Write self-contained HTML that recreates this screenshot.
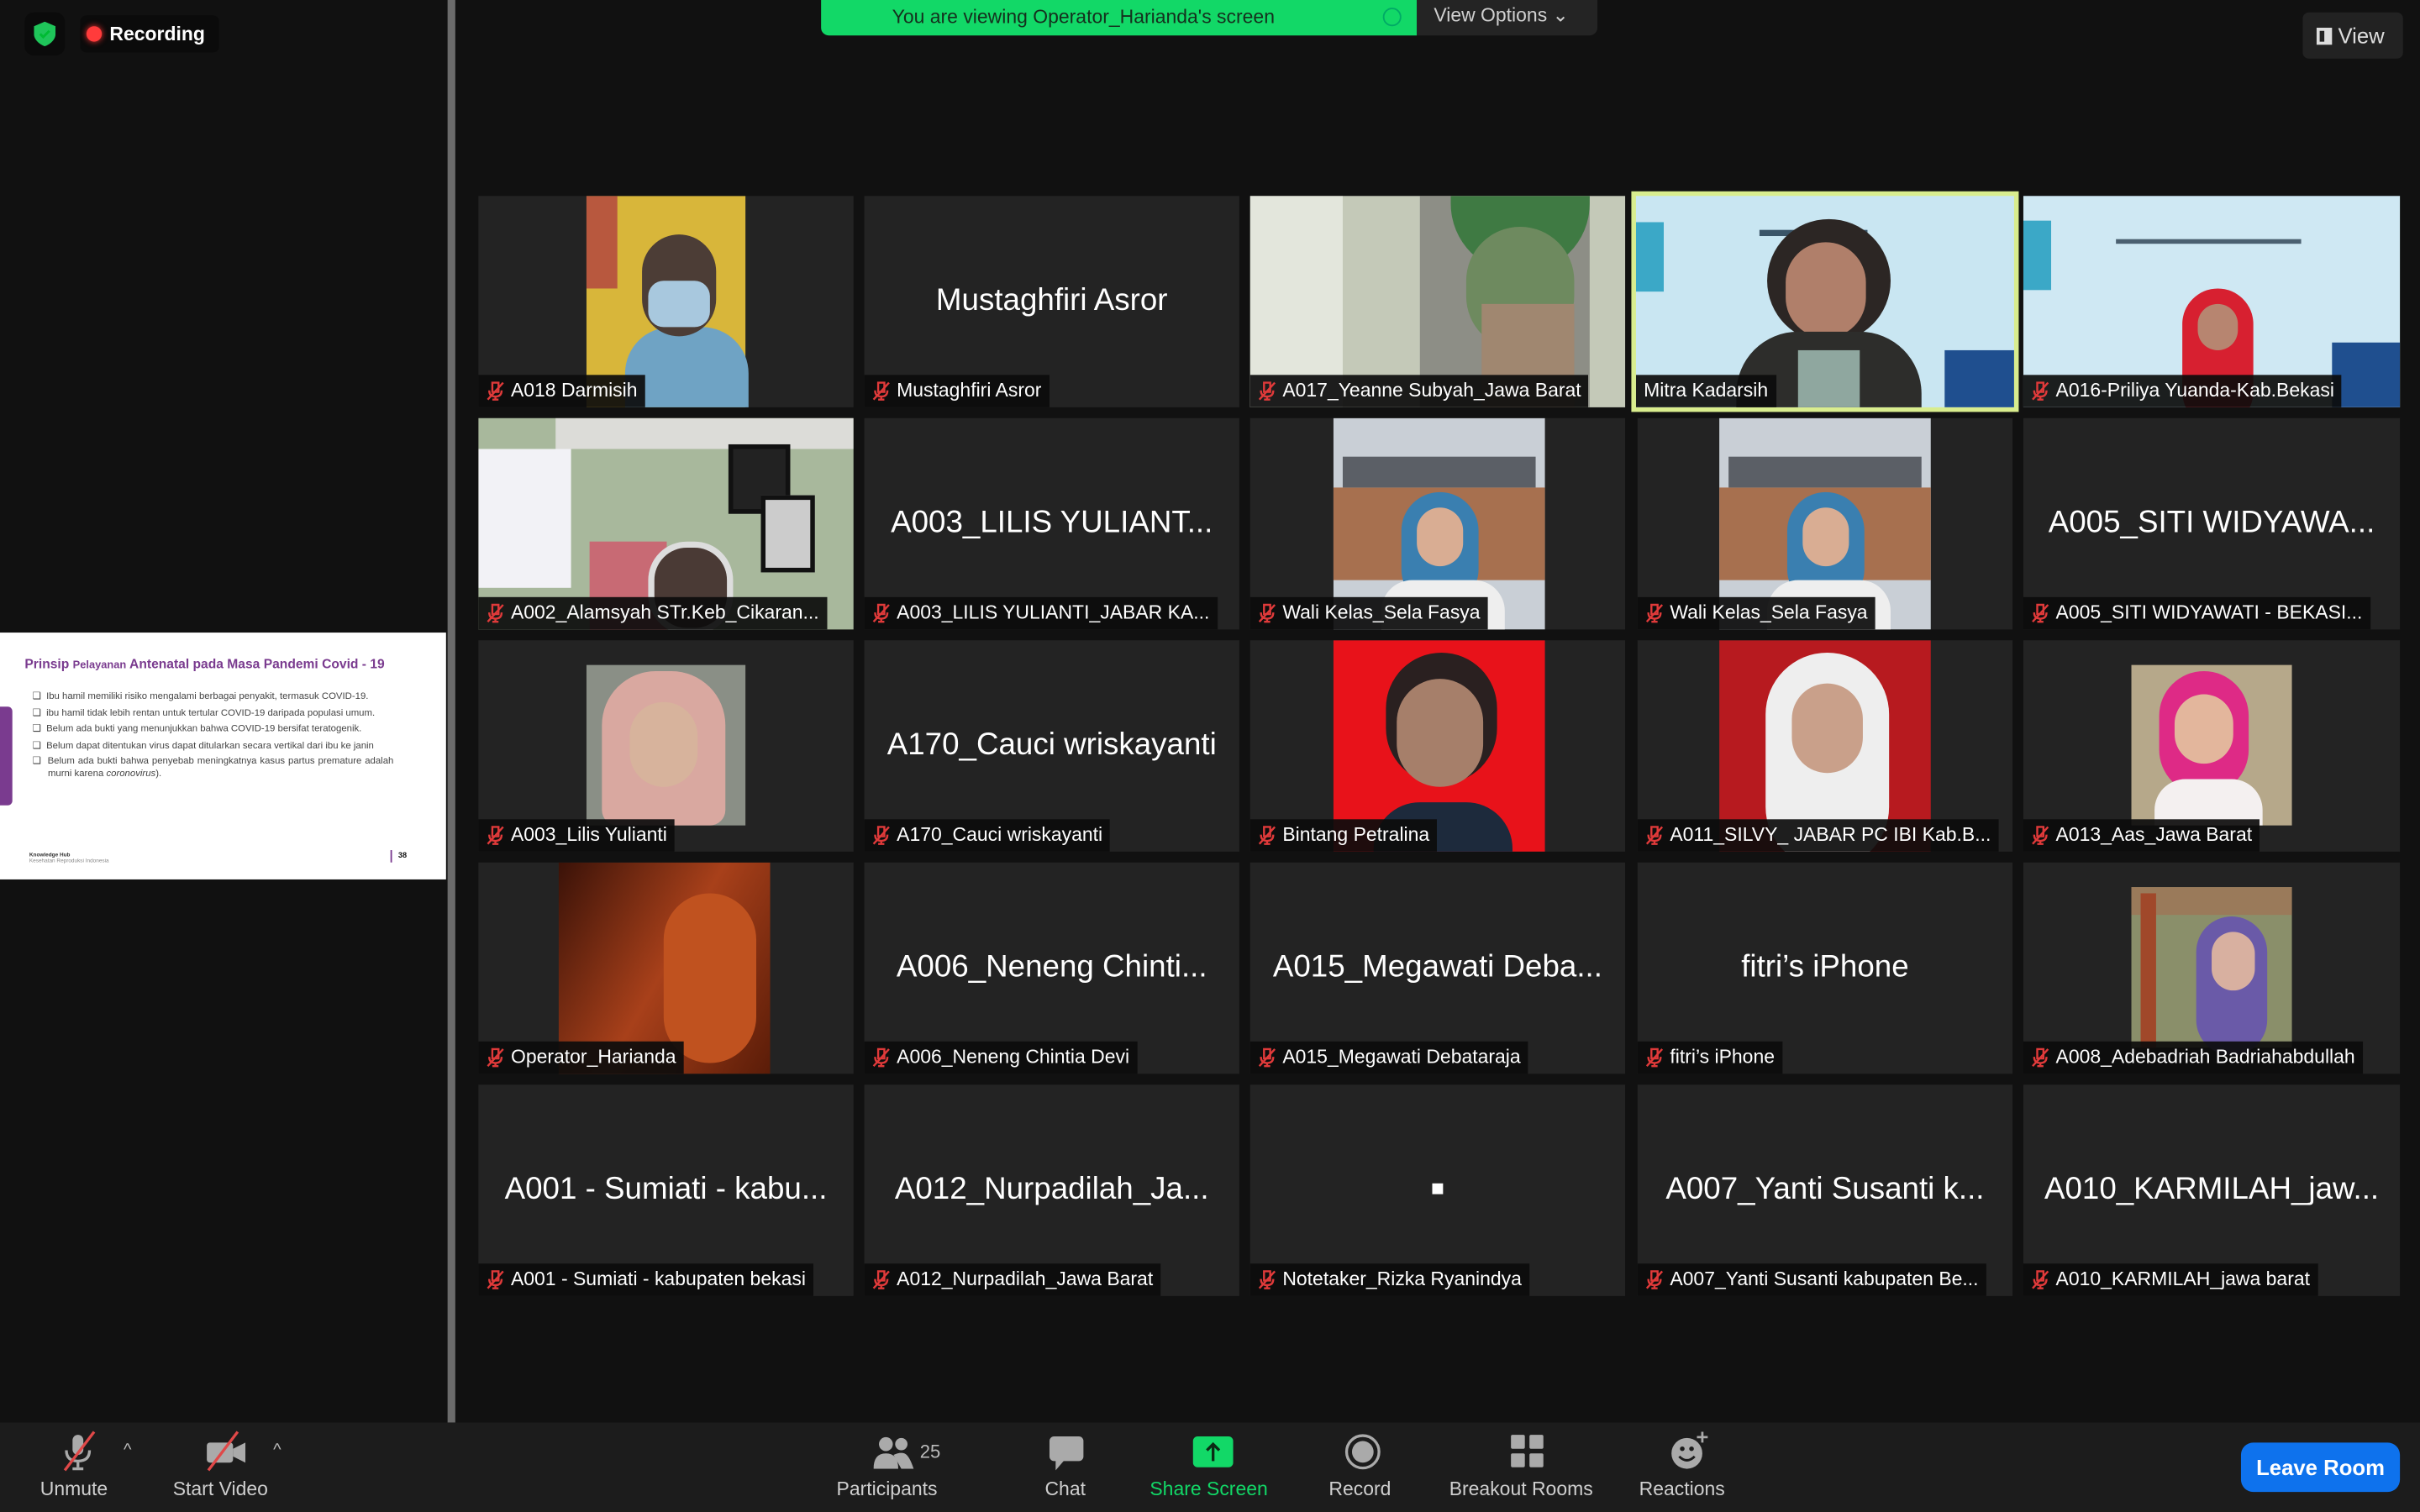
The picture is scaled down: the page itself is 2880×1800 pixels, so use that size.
<!DOCTYPE html>
<html><head><meta charset="utf-8"><style>
*{margin:0;padding:0;box-sizing:border-box}
html,body{width:2880px;height:1800px;overflow:hidden;background:#111}
#w{position:absolute;left:0;top:0;width:1568px;height:980px;transform:scale(1.836735);transform-origin:0 0;background:#111;font-family:"Liberation Sans",sans-serif;color:#fff}
.a{position:absolute}
.t{position:absolute;width:243px;height:137px;background:#232323;overflow:hidden}
.big{position:absolute;left:0;right:0;top:57px;text-align:center;font-size:20px;color:#fff;white-space:nowrap}
.lb{position:absolute;left:0;bottom:0;height:21px;background:rgba(12,12,12,.92);font-size:12.5px;line-height:21px;padding:0 5px 0 21px;white-space:nowrap;color:#fff}
.mic{position:absolute;left:5px;top:4px;width:12px;height:13px}
.tb{position:absolute;top:928px;text-align:center;font-size:12.5px;color:#cfcfcf}
</style></head><body><div id="w">
<div class="a" style="left:290px;top:0;width:5px;height:922px;background:#6b6b6b"></div>
<div class="a" style="left:16px;top:8px;width:26px;height:28px;background:#0b0b0b;border-radius:6px"></div>
<svg class="a" style="left:22px;top:14px" width="14" height="16" viewBox="0 0 14 16"><path d="M7 0L14 3V8C14 12 10 15 7 16C4 15 0 12 0 8V3Z" fill="#1fc55a"/><path d="M4 8L6 10L10 6" stroke="#0b3" stroke-width="1.6" fill="none"/></svg>
<div class="a" style="left:52px;top:10px;width:90px;height:24px;background:#0b0b0b;border-radius:4px"></div>
<div class="a" style="left:56px;top:17px;width:10px;height:10px;border-radius:50%;background:#ff3b3b;box-shadow:0 0 4px #f33"></div>
<div class="a" style="left:71px;top:15px;font-size:12.5px;font-weight:bold">Recording</div>
<div class="a" style="left:0;top:410px;width:289px;height:160px;background:#fff">
 <div class="a" style="left:0;top:48px;width:8px;height:64px;background:#7a3b8f;border-radius:0 3px 3px 0"></div>
 <div class="a" style="left:16px;top:15px;font-size:8.5px;font-weight:bold;color:#7a3b8f;white-space:nowrap">Prinsip <span style="font-size:7px">Pelayanan</span> Antenatal pada Masa Pandemi Covid - 19</div>
 <div class="a" style="left:21px;top:38px;width:234px;font-size:6.2px;line-height:7.2px;color:#444;text-align:justify">
  <div style="margin-bottom:3.4px;padding-left:10px;text-indent:-10px">❑&nbsp; Ibu hamil memiliki risiko mengalami berbagai penyakit, termasuk COVID-19.</div>
  <div style="margin-bottom:3.4px;padding-left:10px;text-indent:-10px">❑&nbsp; ibu hamil tidak lebih rentan untuk tertular COVID-19 daripada populasi umum.</div>
  <div style="margin-bottom:3.4px;padding-left:10px;text-indent:-10px">❑&nbsp; Belum ada bukti yang menunjukkan bahwa COVID-19 bersifat teratogenik.</div>
  <div style="margin-bottom:3.4px;padding-left:10px;text-indent:-10px">❑&nbsp; Belum dapat ditentukan virus dapat ditularkan secara vertikal dari ibu ke janin</div>
  <div style="padding-left:10px;text-indent:-10px">❑&nbsp; Belum ada bukti bahwa penyebab meningkatnya kasus partus premature adalah murni karena <i>coronovirus</i>).</div>
 </div>
 <div class="a" style="left:19px;top:142px;font-size:3.5px;color:#333;font-weight:bold">Knowledge Hub<br><span style="font-weight:normal;color:#888">Kesehatan Reproduksi Indonesia</span></div>
 <div class="a" style="left:253px;top:141px;width:1px;height:8px;background:#7a3b8f"></div>
 <div class="a" style="left:258px;top:142px;font-size:5px;font-weight:bold;color:#111">38</div>
</div>
<div class="a" style="left:532px;top:0;width:386px;height:23px;background:#12d867;border-radius:0 0 0 5px;color:#15301e;font-size:12.5px;line-height:22px;padding-left:46px">You are viewing Operator_Harianda's screen</div>
<div class="a" style="left:896px;top:5px;width:12px;height:12px;border-radius:50%;border:1px solid #0a6;background:#12d867"></div>
<div class="a" style="left:918px;top:0;width:117px;height:23px;background:#242424;border-radius:0 0 5px 0;color:#cfcfcf;font-size:12.5px;line-height:21px;padding-left:11px">View Options ⌄</div>
<div class="a" style="left:1492px;top:8px;width:65px;height:30px;background:#222;border-radius:4px;font-size:14px;line-height:30px;padding-left:9px;color:#ddd"><span style="display:inline-block;width:10px;height:11px;border:2px solid #ddd;border-right-width:5px;vertical-align:-1px"></span> View</div>

<div class="t" style="left:310px;top:127px">
 <div class="a" style="left:70px;top:0;width:103px;height:137px;background:#d8b63a"></div>
 <div class="a" style="left:70px;top:0;width:20px;height:60px;background:#b8583e"></div>
 <div class="a" style="left:95px;top:85px;width:80px;height:60px;border-radius:30px 30px 0 0;background:#6fa3c4"></div>
 <div class="a" style="left:106px;top:25px;width:48px;height:66px;border-radius:24px;background:#4c3d36"></div>
 <div class="a" style="left:110px;top:55px;width:40px;height:30px;border-radius:10px;background:#a8c8de"></div>
 <div class="lb">A018 Darmisih<svg class="mic" viewBox="0 0 12 13"><path d="M4 1h4v6H4zM2 6q0 4 4 4t4-4M6 10v2M4 12h4" stroke="#e03a3a" fill="none" stroke-width="1.3"/><path d="M1 12L11 1" stroke="#e03a3a" stroke-width="1.3"/></svg></div>
</div>
<div class="t" style="left:560px;top:127px"><div class="big">Mustaghfiri Asror</div>
 <div class="lb">Mustaghfiri Asror<svg class="mic" viewBox="0 0 12 13"><path d="M4 1h4v6H4zM2 6q0 4 4 4t4-4M6 10v2M4 12h4" stroke="#e03a3a" fill="none" stroke-width="1.3"/><path d="M1 12L11 1" stroke="#e03a3a" stroke-width="1.3"/></svg></div></div>
<div class="t" style="left:810px;top:127px;background:#c4c9b8">
 <div class="a" style="left:0;top:0;width:60px;height:137px;background:#e3e6dc"></div>
 <div class="a" style="left:110px;top:0;width:110px;height:137px;background:#8d8e86"></div>
 <div class="a" style="left:130px;top:0;width:90px;height:50px;border-radius:0 0 45px 45px;background:#3f7a43"></div>
 <div class="a" style="left:140px;top:20px;width:70px;height:80px;border-radius:35px;background:#6e8a5f"></div>
 <div class="a" style="left:150px;top:70px;width:60px;height:67px;background:#a08770"></div>
 <div class="lb">A017_Yeanne Subyah_Jawa Barat<svg class="mic" viewBox="0 0 12 13"><path d="M4 1h4v6H4zM2 6q0 4 4 4t4-4M6 10v2M4 12h4" stroke="#e03a3a" fill="none" stroke-width="1.3"/><path d="M1 12L11 1" stroke="#e03a3a" stroke-width="1.3"/></svg></div></div>
<div class="t" style="left:1057px;top:124px;width:251px;height:143px;background:#d9ed8e;padding:3px">
 <div style="position:relative;width:245px;height:137px;background:#c9e6f2;overflow:hidden">
  <div class="a" style="left:0;top:17px;width:18px;height:45px;background:#3ba8c7"></div>
  <div class="a" style="left:200px;top:100px;width:45px;height:37px;background:#1f4f8f"></div>
  <div class="a" style="left:80px;top:22px;width:70px;height:4px;background:#3b5568"></div>
  <div class="a" style="left:85px;top:15px;width:80px;height:80px;border-radius:40px;background:#2c2624"></div>
  <div class="a" style="left:97px;top:30px;width:52px;height:62px;border-radius:26px;background:#b07f6a"></div>
  <div class="a" style="left:65px;top:88px;width:120px;height:60px;border-radius:40px 40px 0 0;background:#2d2d2b"></div>
  <div class="a" style="left:105px;top:100px;width:40px;height:40px;background:#8fa79f"></div>
  <div class="lb" style="padding-left:5px">Mitra Kadarsih</div>
 </div></div>
<div class="t" style="left:1311px;top:127px;width:244px;background:#cfe8f3">
 <div class="a" style="left:0;top:16px;width:18px;height:45px;background:#3ba8c7"></div>
 <div class="a" style="left:200px;top:95px;width:44px;height:42px;background:#1f4f8f"></div>
 <div class="a" style="left:60px;top:28px;width:120px;height:3px;background:#4b6070"></div>
 <div class="a" style="left:103px;top:60px;width:46px;height:90px;border-radius:23px;background:#d72030"></div>
 <div class="a" style="left:113px;top:70px;width:26px;height:30px;border-radius:13px;background:#b78570"></div>
 <div class="lb">A016-Priliya Yuanda-Kab.Bekasi<svg class="mic" viewBox="0 0 12 13"><path d="M4 1h4v6H4zM2 6q0 4 4 4t4-4M6 10v2M4 12h4" stroke="#e03a3a" fill="none" stroke-width="1.3"/><path d="M1 12L11 1" stroke="#e03a3a" stroke-width="1.3"/></svg></div></div>

<div class="t" style="left:310px;top:271px;background:#a8b89c">
 <div class="a" style="left:0;top:20px;width:60px;height:90px;background:#f2f2f6"></div>
 <div class="a" style="left:50px;top:0;width:193px;height:20px;background:#dcdcd8"></div>
 <div class="a" style="left:72px;top:80px;width:50px;height:60px;background:#c86a74"></div>
 <div class="a" style="left:162px;top:17px;width:40px;height:45px;background:#222;border:3px solid #111"></div>
 <div class="a" style="left:183px;top:50px;width:35px;height:50px;background:#ccc;border:3px solid #111"></div>
 <div class="a" style="left:110px;top:80px;width:55px;height:60px;border-radius:25px;background:#4a3a35;border:4px solid #ddd"></div>
 <div class="lb">A002_Alamsyah STr.Keb_Cikaran...<svg class="mic" viewBox="0 0 12 13"><path d="M4 1h4v6H4zM2 6q0 4 4 4t4-4M6 10v2M4 12h4" stroke="#e03a3a" fill="none" stroke-width="1.3"/><path d="M1 12L11 1" stroke="#e03a3a" stroke-width="1.3"/></svg></div></div>
<div class="t" style="left:560px;top:271px"><div class="big">A003_LILIS YULIANT...</div>
 <div class="lb">A003_LILIS YULIANTI_JABAR KA...<svg class="mic" viewBox="0 0 12 13"><path d="M4 1h4v6H4zM2 6q0 4 4 4t4-4M6 10v2M4 12h4" stroke="#e03a3a" fill="none" stroke-width="1.3"/><path d="M1 12L11 1" stroke="#e03a3a" stroke-width="1.3"/></svg></div></div>
<div class="t" style="left:810px;top:271px">
 <div class="a" style="left:54px;top:0;width:137px;height:137px;background:#c9cfd6"></div>
 <div class="a" style="left:54px;top:45px;width:137px;height:60px;background:#a7704f"></div>
 <div class="a" style="left:60px;top:25px;width:125px;height:20px;background:#5b5f66"></div>
 <div class="a" style="left:98px;top:48px;width:50px;height:75px;border-radius:25px;background:#3a7fb0"></div>
 <div class="a" style="left:108px;top:58px;width:30px;height:38px;border-radius:15px;background:#d9ad93"></div>
 <div class="a" style="left:85px;top:105px;width:80px;height:40px;border-radius:20px 20px 0 0;background:#eee"></div>
 <div class="lb">Wali Kelas_Sela Fasya<svg class="mic" viewBox="0 0 12 13"><path d="M4 1h4v6H4zM2 6q0 4 4 4t4-4M6 10v2M4 12h4" stroke="#e03a3a" fill="none" stroke-width="1.3"/><path d="M1 12L11 1" stroke="#e03a3a" stroke-width="1.3"/></svg></div></div>
<div class="t" style="left:1061px;top:271px">
 <div class="a" style="left:53px;top:0;width:137px;height:137px;background:#c9cfd6"></div>
 <div class="a" style="left:53px;top:45px;width:137px;height:60px;background:#a7704f"></div>
 <div class="a" style="left:59px;top:25px;width:125px;height:20px;background:#5b5f66"></div>
 <div class="a" style="left:97px;top:48px;width:50px;height:75px;border-radius:25px;background:#3a7fb0"></div>
 <div class="a" style="left:107px;top:58px;width:30px;height:38px;border-radius:15px;background:#d9ad93"></div>
 <div class="a" style="left:84px;top:105px;width:80px;height:40px;border-radius:20px 20px 0 0;background:#eee"></div>
 <div class="lb">Wali Kelas_Sela Fasya<svg class="mic" viewBox="0 0 12 13"><path d="M4 1h4v6H4zM2 6q0 4 4 4t4-4M6 10v2M4 12h4" stroke="#e03a3a" fill="none" stroke-width="1.3"/><path d="M1 12L11 1" stroke="#e03a3a" stroke-width="1.3"/></svg></div></div>
<div class="t" style="left:1311px;top:271px;width:244px"><div class="big">A005_SITI WIDYAWA...</div>
 <div class="lb">A005_SITI WIDYAWATI - BEKASI...<svg class="mic" viewBox="0 0 12 13"><path d="M4 1h4v6H4zM2 6q0 4 4 4t4-4M6 10v2M4 12h4" stroke="#e03a3a" fill="none" stroke-width="1.3"/><path d="M1 12L11 1" stroke="#e03a3a" stroke-width="1.3"/></svg></div></div>

<div class="t" style="left:310px;top:415px">
 <div class="a" style="left:70px;top:16px;width:103px;height:104px;background:#8a8f86"></div>
 <div class="a" style="left:80px;top:20px;width:80px;height:100px;border-radius:35px 35px 10px 10px;background:#d9a8a0"></div>
 <div class="a" style="left:98px;top:40px;width:44px;height:55px;border-radius:22px;background:#d7b39c"></div>
 <div class="lb">A003_Lilis Yulianti<svg class="mic" viewBox="0 0 12 13"><path d="M4 1h4v6H4zM2 6q0 4 4 4t4-4M6 10v2M4 12h4" stroke="#e03a3a" fill="none" stroke-width="1.3"/><path d="M1 12L11 1" stroke="#e03a3a" stroke-width="1.3"/></svg></div></div>
<div class="t" style="left:560px;top:415px"><div class="big">A170_Cauci wriskayanti</div>
 <div class="lb">A170_Cauci wriskayanti<svg class="mic" viewBox="0 0 12 13"><path d="M4 1h4v6H4zM2 6q0 4 4 4t4-4M6 10v2M4 12h4" stroke="#e03a3a" fill="none" stroke-width="1.3"/><path d="M1 12L11 1" stroke="#e03a3a" stroke-width="1.3"/></svg></div></div>
<div class="t" style="left:810px;top:415px">
 <div class="a" style="left:54px;top:0;width:137px;height:137px;background:#e8121a"></div>
 <div class="a" style="left:88px;top:8px;width:72px;height:85px;border-radius:36px;background:#2a2020"></div>
 <div class="a" style="left:95px;top:25px;width:56px;height:70px;border-radius:28px;background:#a67f6a"></div>
 <div class="a" style="left:80px;top:105px;width:90px;height:40px;border-radius:30px 30px 0 0;background:#1d2a3c"></div>
 <div class="lb">Bintang Petralina<svg class="mic" viewBox="0 0 12 13"><path d="M4 1h4v6H4zM2 6q0 4 4 4t4-4M6 10v2M4 12h4" stroke="#e03a3a" fill="none" stroke-width="1.3"/><path d="M1 12L11 1" stroke="#e03a3a" stroke-width="1.3"/></svg></div></div>
<div class="t" style="left:1061px;top:415px">
 <div class="a" style="left:53px;top:0;width:137px;height:137px;background:#b71a1f"></div>
 <div class="a" style="left:83px;top:8px;width:80px;height:140px;border-radius:40px;background:#eee"></div>
 <div class="a" style="left:100px;top:28px;width:46px;height:58px;border-radius:23px;background:#c9a08a"></div>
 <div class="lb">A011_SILVY_ JABAR PC IBI Kab.B...<svg class="mic" viewBox="0 0 12 13"><path d="M4 1h4v6H4zM2 6q0 4 4 4t4-4M6 10v2M4 12h4" stroke="#e03a3a" fill="none" stroke-width="1.3"/><path d="M1 12L11 1" stroke="#e03a3a" stroke-width="1.3"/></svg></div></div>
<div class="t" style="left:1311px;top:415px;width:244px">
 <div class="a" style="left:70px;top:16px;width:104px;height:104px;background:#b6a88a"></div>
 <div class="a" style="left:88px;top:20px;width:58px;height:80px;border-radius:29px;background:#de2a86"></div>
 <div class="a" style="left:98px;top:35px;width:38px;height:45px;border-radius:19px;background:#e3b69c"></div>
 <div class="a" style="left:85px;top:90px;width:70px;height:30px;border-radius:20px 20px 0 0;background:#f4f0f0"></div>
 <div class="lb">A013_Aas_Jawa Barat<svg class="mic" viewBox="0 0 12 13"><path d="M4 1h4v6H4zM2 6q0 4 4 4t4-4M6 10v2M4 12h4" stroke="#e03a3a" fill="none" stroke-width="1.3"/><path d="M1 12L11 1" stroke="#e03a3a" stroke-width="1.3"/></svg></div></div>

<div class="t" style="left:310px;top:559px">
 <div class="a" style="left:52px;top:0;width:137px;height:137px;background:linear-gradient(120deg,#3a1208,#a8401a 50%,#5a1c08)"></div>
 <div class="a" style="left:120px;top:20px;width:60px;height:110px;border-radius:30px;background:#c0521f"></div>
 <div class="lb">Operator_Harianda<svg class="mic" viewBox="0 0 12 13"><path d="M4 1h4v6H4zM2 6q0 4 4 4t4-4M6 10v2M4 12h4" stroke="#e03a3a" fill="none" stroke-width="1.3"/><path d="M1 12L11 1" stroke="#e03a3a" stroke-width="1.3"/></svg></div></div>
<div class="t" style="left:560px;top:559px"><div class="big">A006_Neneng Chinti...</div>
 <div class="lb">A006_Neneng Chintia Devi<svg class="mic" viewBox="0 0 12 13"><path d="M4 1h4v6H4zM2 6q0 4 4 4t4-4M6 10v2M4 12h4" stroke="#e03a3a" fill="none" stroke-width="1.3"/><path d="M1 12L11 1" stroke="#e03a3a" stroke-width="1.3"/></svg></div></div>
<div class="t" style="left:810px;top:559px"><div class="big">A015_Megawati Deba...</div>
 <div class="lb">A015_Megawati Debataraja<svg class="mic" viewBox="0 0 12 13"><path d="M4 1h4v6H4zM2 6q0 4 4 4t4-4M6 10v2M4 12h4" stroke="#e03a3a" fill="none" stroke-width="1.3"/><path d="M1 12L11 1" stroke="#e03a3a" stroke-width="1.3"/></svg></div></div>
<div class="t" style="left:1061px;top:559px"><div class="big">fitri’s iPhone</div>
 <div class="lb">fitri’s iPhone<svg class="mic" viewBox="0 0 12 13"><path d="M4 1h4v6H4zM2 6q0 4 4 4t4-4M6 10v2M4 12h4" stroke="#e03a3a" fill="none" stroke-width="1.3"/><path d="M1 12L11 1" stroke="#e03a3a" stroke-width="1.3"/></svg></div></div>
<div class="t" style="left:1311px;top:559px;width:244px">
 <div class="a" style="left:70px;top:16px;width:104px;height:104px;background:#8a8f6a"></div>
 <div class="a" style="left:70px;top:16px;width:104px;height:18px;background:#9a7a5a"></div>
 <div class="a" style="left:76px;top:20px;width:10px;height:100px;background:#a0482a"></div>
 <div class="a" style="left:112px;top:35px;width:46px;height:90px;border-radius:23px;background:#6a5aa8"></div>
 <div class="a" style="left:122px;top:45px;width:28px;height:38px;border-radius:14px;background:#d8b0a0"></div>
 <div class="lb">A008_Adebadriah Badriahabdullah<svg class="mic" viewBox="0 0 12 13"><path d="M4 1h4v6H4zM2 6q0 4 4 4t4-4M6 10v2M4 12h4" stroke="#e03a3a" fill="none" stroke-width="1.3"/><path d="M1 12L11 1" stroke="#e03a3a" stroke-width="1.3"/></svg></div></div>

<div class="t" style="left:310px;top:703px"><div class="big">A001 - Sumiati - kabu...</div>
 <div class="lb">A001 - Sumiati - kabupaten bekasi<svg class="mic" viewBox="0 0 12 13"><path d="M4 1h4v6H4zM2 6q0 4 4 4t4-4M6 10v2M4 12h4" stroke="#e03a3a" fill="none" stroke-width="1.3"/><path d="M1 12L11 1" stroke="#e03a3a" stroke-width="1.3"/></svg></div></div>
<div class="t" style="left:560px;top:703px"><div class="big">A012_Nurpadilah_Ja...</div>
 <div class="lb">A012_Nurpadilah_Jawa Barat<svg class="mic" viewBox="0 0 12 13"><path d="M4 1h4v6H4zM2 6q0 4 4 4t4-4M6 10v2M4 12h4" stroke="#e03a3a" fill="none" stroke-width="1.3"/><path d="M1 12L11 1" stroke="#e03a3a" stroke-width="1.3"/></svg></div></div>
<div class="t" style="left:810px;top:703px"><div class="a" style="left:118px;top:64px;width:7px;height:7px;background:#fff"></div>
 <div class="lb">Notetaker_Rizka Ryanindya<svg class="mic" viewBox="0 0 12 13"><path d="M4 1h4v6H4zM2 6q0 4 4 4t4-4M6 10v2M4 12h4" stroke="#e03a3a" fill="none" stroke-width="1.3"/><path d="M1 12L11 1" stroke="#e03a3a" stroke-width="1.3"/></svg></div></div>
<div class="t" style="left:1061px;top:703px"><div class="big">A007_Yanti Susanti k...</div>
 <div class="lb">A007_Yanti Susanti kabupaten Be...<svg class="mic" viewBox="0 0 12 13"><path d="M4 1h4v6H4zM2 6q0 4 4 4t4-4M6 10v2M4 12h4" stroke="#e03a3a" fill="none" stroke-width="1.3"/><path d="M1 12L11 1" stroke="#e03a3a" stroke-width="1.3"/></svg></div></div>
<div class="t" style="left:1311px;top:703px;width:244px"><div class="big">A010_KARMILAH_jaw...</div>
 <div class="lb">A010_KARMILAH_jawa barat<svg class="mic" viewBox="0 0 12 13"><path d="M4 1h4v6H4zM2 6q0 4 4 4t4-4M6 10v2M4 12h4" stroke="#e03a3a" fill="none" stroke-width="1.3"/><path d="M1 12L11 1" stroke="#e03a3a" stroke-width="1.3"/></svg></div></div>

<div class="a" style="left:0;top:922px;width:1568px;height:58px;background:#1c1c1c"></div>
<svg class="a" style="left:36px;top:927px" width="28" height="28" viewBox="0 0 28 28"><rect x="11" y="3" width="7" height="13" rx="3.5" fill="#aaa"/><path d="M7 13q0 7 7.5 7t7.5-7M14.5 20v4M11 25h7" stroke="#aaa" stroke-width="1.8" fill="none"/><path d="M6 26L25 1" stroke="#e04848" stroke-width="1.8"/></svg>
<div class="a" style="left:80px;top:934px;font-size:11px;color:#bbb">^</div>
<svg class="a" style="left:132px;top:927px" width="30" height="28" viewBox="0 0 30 28"><rect x="2" y="8" width="17" height="13" rx="2" fill="#aaa"/><path d="M19 12L27 8V21L19 17Z" fill="#aaa"/><path d="M3 26L22 1" stroke="#e04848" stroke-width="1.8"/></svg>
<div class="a" style="left:177px;top:934px;font-size:11px;color:#bbb">^</div>
<div class="tb" style="left:26px;top:958px">Unmute</div>
<div class="tb" style="left:112px;top:958px">Start Video</div>
<svg class="a" style="left:566px;top:930px" width="28" height="22" viewBox="0 0 28 22"><circle cx="8" cy="6" r="4.5" fill="#aaa"/><path d="M0 22q0-10 8-10t8 10Z" fill="#aaa"/><circle cx="18" cy="6" r="4" fill="#aaa"/><path d="M13 13q4-2 7-1t6 10H18Z" fill="#aaa"/></svg>
<div class="a" style="left:596px;top:934px;font-size:12px;color:#bbb">25</div>
<div class="tb" style="left:542px;top:958px">Participants</div>
<svg class="a" style="left:679px;top:930px" width="24" height="24" viewBox="0 0 24 24"><rect x="1" y="1" width="22" height="16" rx="3" fill="#aaa"/><path d="M5 16L5 23L11 16Z" fill="#aaa"/></svg>
<div class="tb" style="left:677px;top:958px">Chat</div>
<div class="a" style="left:773px;top:931px;width:26px;height:20px;background:#12d867;border-radius:3px"></div>
<svg class="a" style="left:779px;top:933px" width="14" height="16" viewBox="0 0 14 16"><path d="M7 14V3M3 7L7 3L11 7" stroke="#0b2a14" stroke-width="1.8" fill="none"/></svg>
<div class="tb" style="left:745px;top:958px;color:#12d867">Share Screen</div>
<svg class="a" style="left:871px;top:929px" width="24" height="24" viewBox="0 0 24 24"><circle cx="12" cy="12" r="10.5" stroke="#aaa" stroke-width="1.8" fill="none"/><circle cx="12" cy="12" r="7" fill="#aaa"/></svg>
<div class="tb" style="left:861px;top:958px">Record</div>
<svg class="a" style="left:978px;top:929px" width="24" height="24" viewBox="0 0 24 24"><rect x="1" y="1" width="9" height="9" rx="1" fill="#aaa"/><rect x="13" y="1" width="9" height="9" rx="1" fill="#aaa"/><rect x="1" y="13" width="9" height="9" rx="1" fill="#aaa"/><rect x="13" y="13" width="9" height="9" rx="1" fill="#aaa"/></svg>
<div class="tb" style="left:939px;top:958px">Breakout Rooms</div>
<svg class="a" style="left:1082px;top:927px" width="26" height="26" viewBox="0 0 26 26"><circle cx="11" cy="15" r="10" fill="#aaa"/><circle cx="8" cy="12" r="1.5" fill="#1c1c1c"/><circle cx="14" cy="12" r="1.5" fill="#1c1c1c"/><path d="M6 17q5 5 10 0" stroke="#1c1c1c" stroke-width="1.6" fill="none"/><path d="M21 1v7M17.5 4.5h7" stroke="#aaa" stroke-width="1.5"/></svg>
<div class="tb" style="left:1062px;top:958px">Reactions</div>
<div class="a" style="left:1452px;top:935px;width:103px;height:32px;background:#0e72ed;border-radius:8px;font-size:14px;font-weight:bold;line-height:32px;text-align:center">Leave Room</div>
</div></body></html>
